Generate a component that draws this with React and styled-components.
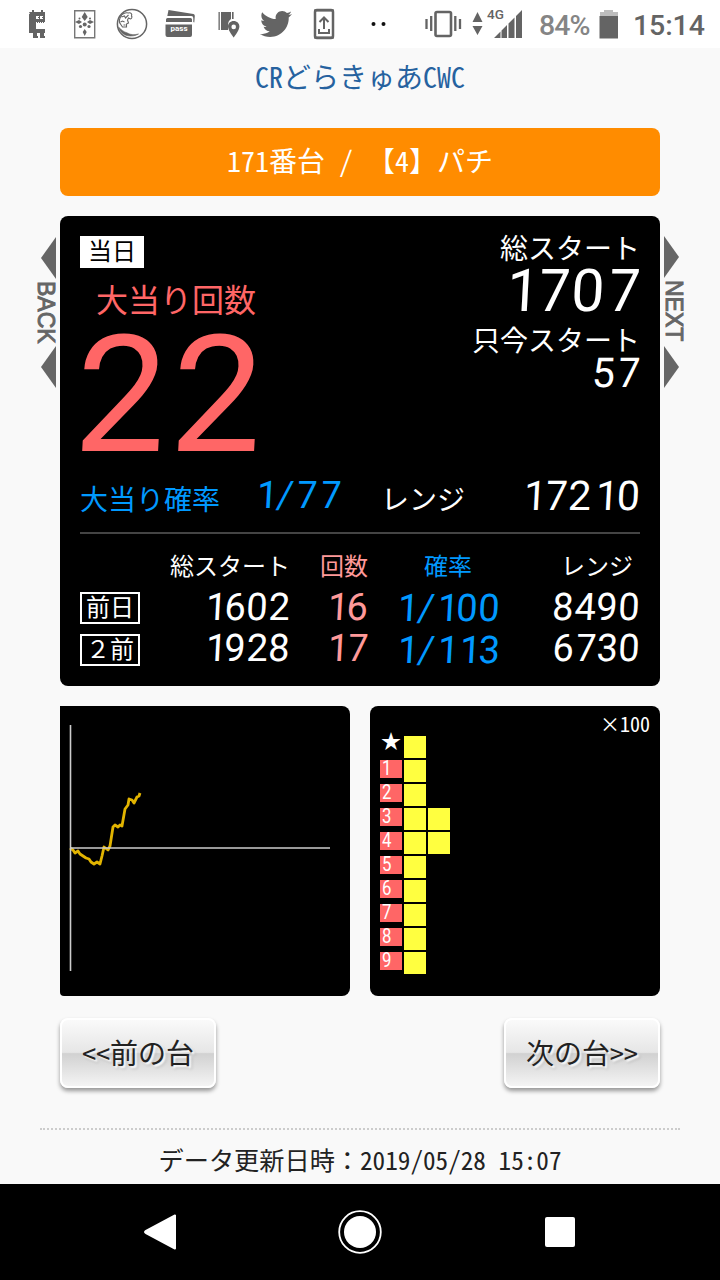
import React from 'react';
import styled, { createGlobalStyle, css } from 'styled-components';
import { FaTwitter } from 'react-icons/fa';

const Global = createGlobalStyle`
  *, *::before, *::after { box-sizing: border-box; }
  body {
    margin: 0;
    background: #f9f9f9;
    color: #222;
    font-family: "Noto Sans CJK JP", sans-serif;
    font-weight: 400;
    font-feature-settings: "hwid" 1;
  }
`;

const RED = '#ff6666';
const PINK = '#ff9999';
const BLUE = '#0099ff';

const Screen = styled.div`
  width: 720px;
  height: 1280px;
  display: flex;
  flex-direction: column;
  overflow: hidden;
`;

const StatusBar = styled.header`
  height: 48px;
  background: #fff;
  display: flex;
  align-items: center;
  flex: none;
  color: #646464;
  font-family: Roboto, sans-serif;
  font-feature-settings: normal;
  white-space: nowrap;
  svg { display: block; flex: none; }
`;
const Notifications = styled.div`
  width: 424px;
  height: 48px;
  display: grid;
  grid-template-columns: repeat(7, 48px) 60px;
  align-items: center;
  justify-items: center;
  justify-content: start;
  padding-left: 12px;
`;
const System = styled.div`
  display: flex;
  align-items: center;
  height: 48px;
`;
const Level = styled.span`
  width: 60px;
  padding-top: 2px;
  font-size: 28.5px;
  font-weight: 500;
  letter-spacing: -0.9px;
  color: #858585;
`;
const Clock = styled.span`
  padding: 2px 0 0 14px;
  font-size: 28.5px;
  font-weight: 500;
  letter-spacing: -0.1px;
`;

const Page = styled.main`
  flex: 1;
  min-height: 0;
  display: flex;
  flex-direction: column;
  align-items: center;
`;
const Title = styled.h1`
  margin: 0;
  height: 80px;
  line-height: 57px;
  font-size: 28px;
  font-weight: 400;
  color: #26629f;
`;
const Banner = styled.div`
  width: 600px;
  height: 68px;
  border-radius: 8px;
  background: #ff8c00;
  color: #fff;
  font-size: 28px;
  line-height: 65px;
  text-align: center;
  white-space: pre;
`;

const Board = styled.section`
  margin-top: 20px;
  display: grid;
  grid-template-columns: 22px 600px 22px;
`;
const Panel = styled.div`
  height: 470px;
  border-radius: 8px;
  background: #000;
  color: #fff;
  padding: 20px 20px 0;
`;
const Today = styled.div`
  display: flex;
  justify-content: space-between;
  height: 238px;
`;
const Jackpots = styled.div`
  width: 200px;
  color: ${RED};
`;
const Totals = styled.div`
  width: 240px;
  display: flex;
  flex-direction: column;
  align-items: flex-end;
`;
const Heading = styled.div`
  height: ${p => p.$h}px;
  line-height: ${p => p.$lh || p.$h}px;
  font-size: ${p => p.$size || 28}px;
  padding-left: ${p => p.$indent || 0}px;
  color: ${p => p.$color || 'inherit'};
  white-space: nowrap;
`;
const Tag = styled.span`
  display: block;
  width: ${p => (p.$filled ? 64 : 60)}px;
  height: 32px;
  font-size: 24px;
  font-feature-settings: normal;
  text-align: center;
  white-space: nowrap;
  ${p => p.$filled
    ? css`background: #fff; color: #000; line-height: 28px;`
    : css`border: 2px solid #fff; line-height: 24px;`}
`;

const Readout = styled.div`
  display: flex;
  justify-content: ${p => (p.$start ? 'flex-start' : 'flex-end')};
  height: ${p => p.$h}px;
  line-height: ${p => p.$h}px;
  margin-left: ${p => p.$shift || 0}px;
  font-family: Roboto, sans-serif;
  font-feature-settings: "pnum" 1;
  font-weight: ${p => p.$weight || 400};
  font-size: ${p => p.$size}px;
  color: ${p => p.$color || 'inherit'};
`;
const Cell = styled.span`
  display: flex;
  justify-content: flex-end;
  flex: none;
  width: ${p => p.$w}px;
  transform: skewX(${p => (p.$slash ? -8 : -3)}deg);
`;
const Digits = ({ children, pitch, slash, ...look }) => (
  <Readout {...look}>
    {[...children].map((ch, i) => (
      <Cell key={i} $w={ch === '/' ? slash : pitch} $slash={ch === '/'}>{ch}</Cell>
    ))}
  </Readout>
);

const RateRow = styled.div`
  display: grid;
  grid-template-columns: 171px 130px 119px 140px;
  height: 60px;
  padding-top: 8px;
  border-bottom: 2px solid #444;
`;
const History = styled.div`
  display: grid;
  grid-template-columns: 60px 150px 78px 132px 140px;
  grid-template-rows: 56px 41px 42px;
`;
const ColumnHead = styled.div`
  font-size: 24px;
  line-height: 61px;
  text-align: right;
  white-space: nowrap;
  color: ${p => p.$color || 'inherit'};
  padding-right: ${p => p.$pad || 0}px;
`;
const TagCell = styled.div`
  padding-top: ${p => p.$top}px;
`;

const Charts = styled.div`
  width: 600px;
  margin-top: 20px;
  display: flex;
  justify-content: space-between;
`;
const Chart = styled.div`
  width: 290px;
  height: 290px;
  background: #000;
  border-radius: ${p => p.$corners || '8px'};
  color: #fff;
  svg { display: block; }
`;
const Scale = styled.div`
  height: 30px;
  padding-right: 10px;
  font-size: 20px;
  line-height: 36px;
  text-align: right;
`;
const Bars = styled.div`
  display: flex;
  flex-direction: column;
  gap: 2px;
  padding-left: 10px;
`;
const BarRow = styled.div`
  display: flex;
  gap: 2px;
  height: 22px;
`;
const BarLabel = styled.div`
  width: 22px;
  height: 18px;
  background: ${p => (p.$plain ? 'transparent' : RED)};
  font-family: Roboto, "Noto Sans CJK JP", sans-serif;
  font-feature-settings: normal;
  font-size: 20px;
  line-height: ${p => (p.$plain ? 13 : 17)}px;
  padding-left: ${p => (p.$plain ? 1 : 2)}px;
`;
const Narrow = styled.span`
  display: block;
  width: 20px;
  transform: scaleX(0.84);
  transform-origin: left;
`;
const Block = styled.span`
  width: 22px;
  height: 22px;
  background: #ffff40;
`;

const Pager = styled.nav`
  width: 600px;
  margin-top: 22px;
  display: flex;
  justify-content: space-between;
`;
const PagerButton = styled.button`
  width: 156px;
  height: 70px;
  padding: 0 0 3px;
  border: 2px solid #fff;
  border-radius: 8px;
  background: linear-gradient(#fafafa 0%, #e6e6e6 49%, #d1d1d1 51%, #f4f4f4 100%);
  box-shadow: 0 3px 4px rgba(0, 0, 0, 0.4);
  color: #222;
  font: inherit;
  font-size: 28px;
  line-height: 60px;
  font-feature-settings: inherit;
  text-shadow: 2px 2px 2px #fff, 3px 3px 3px rgba(0, 0, 0, 0.15);
`;
const Updated = styled.footer`
  width: 640px;
  height: 56px;
  margin-top: 40px;
  border-top: 2px dotted #ccc;
  font-size: 25.2px;
  line-height: 59px;
  text-align: center;
  white-space: pre;
`;
const FullWidth = styled.span`
  font-feature-settings: normal;
`;
const NavBar = styled.nav`
  flex: none;
  height: 96px;
  background: #000;
  display: flex;
  align-items: center;
  justify-content: space-between;
  padding: 0 138px;
  svg { display: block; }
`;

const Critter = () => (
  <svg width="24" height="32" viewBox="24 8 24 32">
    <path fill="#646464" d="M29 12h3v-2h2v2h7v-2h2v2h2v10h-9v7h9v4h-1v3h1v2h-5v-5h-3v3h1v2h-5v-5h-4V14h1z" />
    <path fill="#fff" d="M36 16h3v3h-3zM40 16h3v3h-3z" />
    <path stroke="#646464" d="M38 17.5h1M42 17.5h1" />
    <path stroke="#646464" strokeDasharray="1 1" d="M37 22.500h8" />
  </svg>
);
const Crest = () => (
  <svg width="32" height="32" viewBox="68 8 32 32">
    <path d="M74.7 10.7h20v27h-20z" fill="none" stroke="#777" strokeWidth="1.4" />
    <g fill="#666">
      <path d="M84.7 12l3 5-3 4-3-4zM84.7 29l2 3-2 4-2-4zM75 22l4-2 3 2-3 2zM94 22l-4-2-3 2 3 2z" />
      <circle cx="84.7" cy="24.5" r="2" /><circle cx="80.5" cy="26.5" r="1.6" /><circle cx="89" cy="26.5" r="1.6" />
      <circle cx="79.5" cy="18.5" r="1" /><circle cx="90" cy="18.5" r="1" />
    </g>
  </svg>
);
const Portrait = () => (
  <svg width="32" height="32" viewBox="116.500 8 32 32" fill="none" stroke="#646464">
    <circle cx="132.500" cy="24" r="14.600" strokeWidth="1.5" />
    <path strokeWidth="1.100" d="M121 17c1-3 5-5 8-4 2-1 4 1 3 3 1 1 0 3-1 3l-2-1-1 2 1 3-2 1v3l-4 0-2-3c-2-2-1-5 0-7M122 17l3-1 1 2 3-3M121 22l2-1 2 1M124 25h2" />
    <path fill="#646464" strokeWidth=".6" d="M119 27c2 6 6 9 12 9 4 0 6-1 8-2-4 1-8 1-11-1-4-1-7-4-9-6z" />
  </svg>
);
const PassWord = styled.span`
  position: absolute;
  left: 0;
  right: 0;
  top: 14px;
  color: #fff;
  font-size: 8px;
  font-weight: 700;
  line-height: 14px;
  text-align: center;
  padding-right: 2px;
`;
const PassBox = styled.span`
  position: relative;
  width: 32px;
  height: 32px;
`;
const Pass = () => (
  <PassBox>
    <svg width="32" height="32" viewBox="164.500 8 32 32" fill="#646464">
      <path d="M169 10l25 4q1.500.4 1.300 2l-.5 6.500-1-.5v-4q0-2-2-2h-24zM168 18h23q1.500 0 1.500 1.600V22h-26v-2.400q0-1.600 1.500-1.600zM166 24.500h26.500V35q0 2-2 2H168q-2 0-2-2z" />
    </svg>
    <PassWord>pass</PassWord>
  </PassBox>
);
const MapPin = () => (
  <svg width="30" height="32" viewBox="213 8 30 32" fill="#646464">
    <path d="M218.500 12h1.300v18h-1.300zM221 12h10v7q-3 2-3 6v5h-7zM232 12h1.600v7H232z" />
    <path fillRule="evenodd" d="M233.700 21c3.300 0 5.700 2.300 5.700 5.600 0 4-5.700 11-5.700 11s-5.700-7-5.700-11c0-3.300 2.400-5.600 5.700-5.600zm0 3.600a2.300 2.300 0 100 4.600 2.300 2.300 0 000-4.600z" />
  </svg>
);
const PhoneUpload = () => (
  <svg width="32" height="32" viewBox="308 8 32 32" fill="none" stroke="#646464">
    <rect x="315" y="10" width="18" height="28" rx="2" strokeWidth="2.500" />
    <path strokeWidth="2" d="M314 10.500h20M314 37.500h20M324 29V18M319.500 22l4.500-4.500 4.500 4.500M319 29v4h10v-4" />
  </svg>
);
const Dots = () => (
  <svg width="20" height="8" viewBox="0 0 20 8" fill="#111">
    <circle cx="5.500" cy="4" r="2" /><circle cx="15.500" cy="4" r="2" />
  </svg>
);
const Vibrate = () => (
  <svg width="38" height="32" viewBox="424 8 38 32" fill="none" stroke="#646464">
    <rect x="435.500" y="12" width="15.500" height="24" rx="1.500" strokeWidth="2.600" />
    <path strokeWidth="2.300" d="M426.500 19v10M431.200 16v15M455.300 16v15M460 19v10" />
  </svg>
);
const NetworkBox = styled.span`
  position: relative;
  width: 77px;
  height: 48px;
`;
const NetworkLabel = styled.span`
  position: absolute;
  left: 25px;
  top: 5px;
  font-size: 13.500px;
  line-height: 18px;
  font-weight: 500;
`;
const Network = () => (
  <NetworkBox>
    <svg width="77" height="48" viewBox="462 0 77 48" fill="#646464">
      <path d="M472.500 22l5-10 5 10zM472.500 26h10l-5 9z" />
      <path d="M494 38l6.500-6.500V38zM501.500 30.500l5.500-5.500v13h-5.500zM508.500 23.500l6-6V38h-6zM516 16l6-6v28h-6z" />
    </svg>
    <NetworkLabel>4G</NetworkLabel>
  </NetworkBox>
);
const Battery = () => (
  <svg width="20" height="32" viewBox="599 8 20 32">
    <path fill="#bdbdbd" d="M604 10h9v2h5v5h-18v-5h4z" />
    <path fill="#646464" d="M599.500 16h18.500v22.500h-18.500z" />
  </svg>
);

const SideColumn = styled.a`
  display: flex;
  flex-direction: column;
  align-items: ${p => (p.$left ? 'flex-end' : 'flex-start')};
  width: 18px;
  padding-top: ${p => (p.$left ? 21 : 20)}px;
  margin-left: ${p => (p.$left ? 0 : 4)}px;
`;
const VerticalWord = styled.span`
  writing-mode: vertical-rl;
  font-family: "Liberation Sans", sans-serif;
  font-feature-settings: normal;
  font-size: 23px;
  font-weight: 400;
  line-height: 22px;
  width: 22px;
  height: ${p => (p.$left ? 67 : 68)}px;
  padding-top: 2px;
  margin: ${p => (p.$left ? '0 -1px 0 0' : '0 0 0 -1px')};
  color: #666;
  -webkit-text-stroke: 1px #666;
`;
const Pointer = styled.span`
  width: 15px;
  height: 42px;
  background: #666;
  clip-path: ${p => (p.$left ? 'polygon(100% 0, 0 50%, 100% 100%)' : 'polygon(0 0, 100% 50%, 0 100%)')};
`;
const SideLink = ({ label, left }) => (
  <SideColumn $left={left}>
    <Pointer $left={left} />
    <VerticalWord $left={left}>{label}</VerticalWord>
    <Pointer $left={left} />
  </SideColumn>
);

const history = [
  { day: '前日', starts: '1602', hits: '16', rate: '1/100', range: '8490', rateHeight: 37 },
  { day: '２前', starts: '1928', hits: '17', rate: '1/113', range: '6730', rateHeight: 39 },
];
const bars = [['★', 1], ['1', 1], ['2', 1], ['3', 2], ['4', 2], ['5', 1], ['6', 1], ['7', 1], ['8', 1], ['9', 1]];

export default function App() {
  return (
    <Screen>
      <Global />
      <StatusBar>
        <Notifications>
          <Critter /><Crest /><Portrait /><Pass /><MapPin />
          <FaTwitter size={32} /><PhoneUpload /><Dots />
        </Notifications>
        <System>
          <Vibrate /><Network /><Level>84%</Level><Battery /><Clock>15:14</Clock>
        </System>
      </StatusBar>
      <Page>
        <Title>CRどらきゅあCWC</Title>
        <Banner>171番台 / 【4】パチ</Banner>
        <Board>
          <SideLink label="BACK" left />
          <Panel>
            <Today>
              <Jackpots>
                <Tag $filled>当日</Tag>
                <Heading $h={62} $lh={60} $size={32} $indent={16}>大当り回数</Heading>
                <Digits $size={163} $h={132} pitch={96} $shift={-9} $start>22</Digits>
              </Jackpots>
              <Totals>
                <Heading $h={32} $lh={22}>総スタート</Heading>
                <Digits $size={59} $h={46} pitch={35}>1707</Digits>
                <Heading $h={42} $lh={50}>只今スタート</Heading>
                <Digits $size={41} $h={34} pitch={25}>57</Digits>
              </Totals>
            </Today>
            <RateRow>
              <Heading $h={48} $lh={32} $color={BLUE}>大当り確率</Heading>
              <Digits $size={38} $h={26} pitch={24} slash={18} $color={BLUE} $start>1/77</Digits>
              <Heading $h={48} $lh={32}>レンジ</Heading>
              <Digits $size={41} $h={28} pitch={24.3}>17210</Digits>
            </RateRow>
            <History>
              <span />
              <ColumnHead>総スタート</ColumnHead>
              <ColumnHead $color={PINK}>回数</ColumnHead>
              <ColumnHead $color={BLUE} $pad={28}>確率</ColumnHead>
              <ColumnHead $pad={7}>レンジ</ColumnHead>
              {history.map((row, i) => (
                <React.Fragment key={row.day}>
                  <TagCell $top={2 + i}><Tag>{row.day}</Tag></TagCell>
                  <Digits $size={38} $h={34} pitch={22}>{row.starts}</Digits>
                  <Digits $size={38} $h={34} pitch={22} $color={PINK}>{row.hits}</Digits>
                  <Digits $size={38} $h={row.rateHeight} pitch={22} slash={18} $color={BLUE}>{row.rate}</Digits>
                  <Digits $size={38} $h={34} pitch={22}>{row.range}</Digits>
                </React.Fragment>
              ))}
            </History>
          </Panel>
          <SideLink label="NEXT" />
        </Board>
        <Charts>
          <Chart $corners="0 8px 8px 4px">
            <svg width="290" height="290" viewBox="0 0 290 290" fill="none">
              <polyline
                stroke="#e2b400" strokeWidth="2.8" strokeLinejoin="round"
                points="10,142 13,144 15,147 18,145 20,148 23,150 26,152 29,153 31,156 34,158 37,156 40,158 42,150 44,141 48,144 50,140 53,121 55,119 58,121 60,119 62,120 65,103 68,99 69,93 72,94 74,97 77,91 79,90 80,87"
              />
              <path stroke="#ccc" strokeWidth="1.600" d="M10.500 19v246M10 142h260" />
            </svg>
          </Chart>
          <Chart>
            <Scale>×100</Scale>
            <Bars>
              {bars.map(([label, count]) => (
                <BarRow key={label}>
                  <BarLabel $plain={label === '★'}>
                    {label === '★' ? label : <Narrow>{label}</Narrow>}
                  </BarLabel>
                  {Array.from({ length: count }, (_, i) => <Block key={i} />)}
                </BarRow>
              ))}
            </Bars>
          </Chart>
        </Charts>
        <Pager>
          <PagerButton>&lt;&lt;前の台</PagerButton>
          <PagerButton>次の台&gt;&gt;</PagerButton>
        </Pager>
        <Updated><FullWidth>データ更新日時：</FullWidth>2019/05/28 15:07</Updated>
      </Page>
      <NavBar>
        <svg width="44" height="44" viewBox="0 0 44 44"><path d="M37 5.500v33L8 23q-2-1 0-2.200z" fill="#fff" stroke="#fff" strokeWidth="2" strokeLinejoin="round" /></svg>
        <svg width="44" height="44" viewBox="0 0 44 44"><circle cx="22" cy="22" r="16" fill="#fff" /><circle cx="22" cy="22" r="20.800" fill="none" stroke="#fff" strokeWidth="1.800" /></svg>
        <svg width="44" height="44" viewBox="0 0 44 44"><rect x="7" y="7" width="30" height="30" rx="2" fill="#fff" /></svg>
      </NavBar>
    </Screen>
  );
}
